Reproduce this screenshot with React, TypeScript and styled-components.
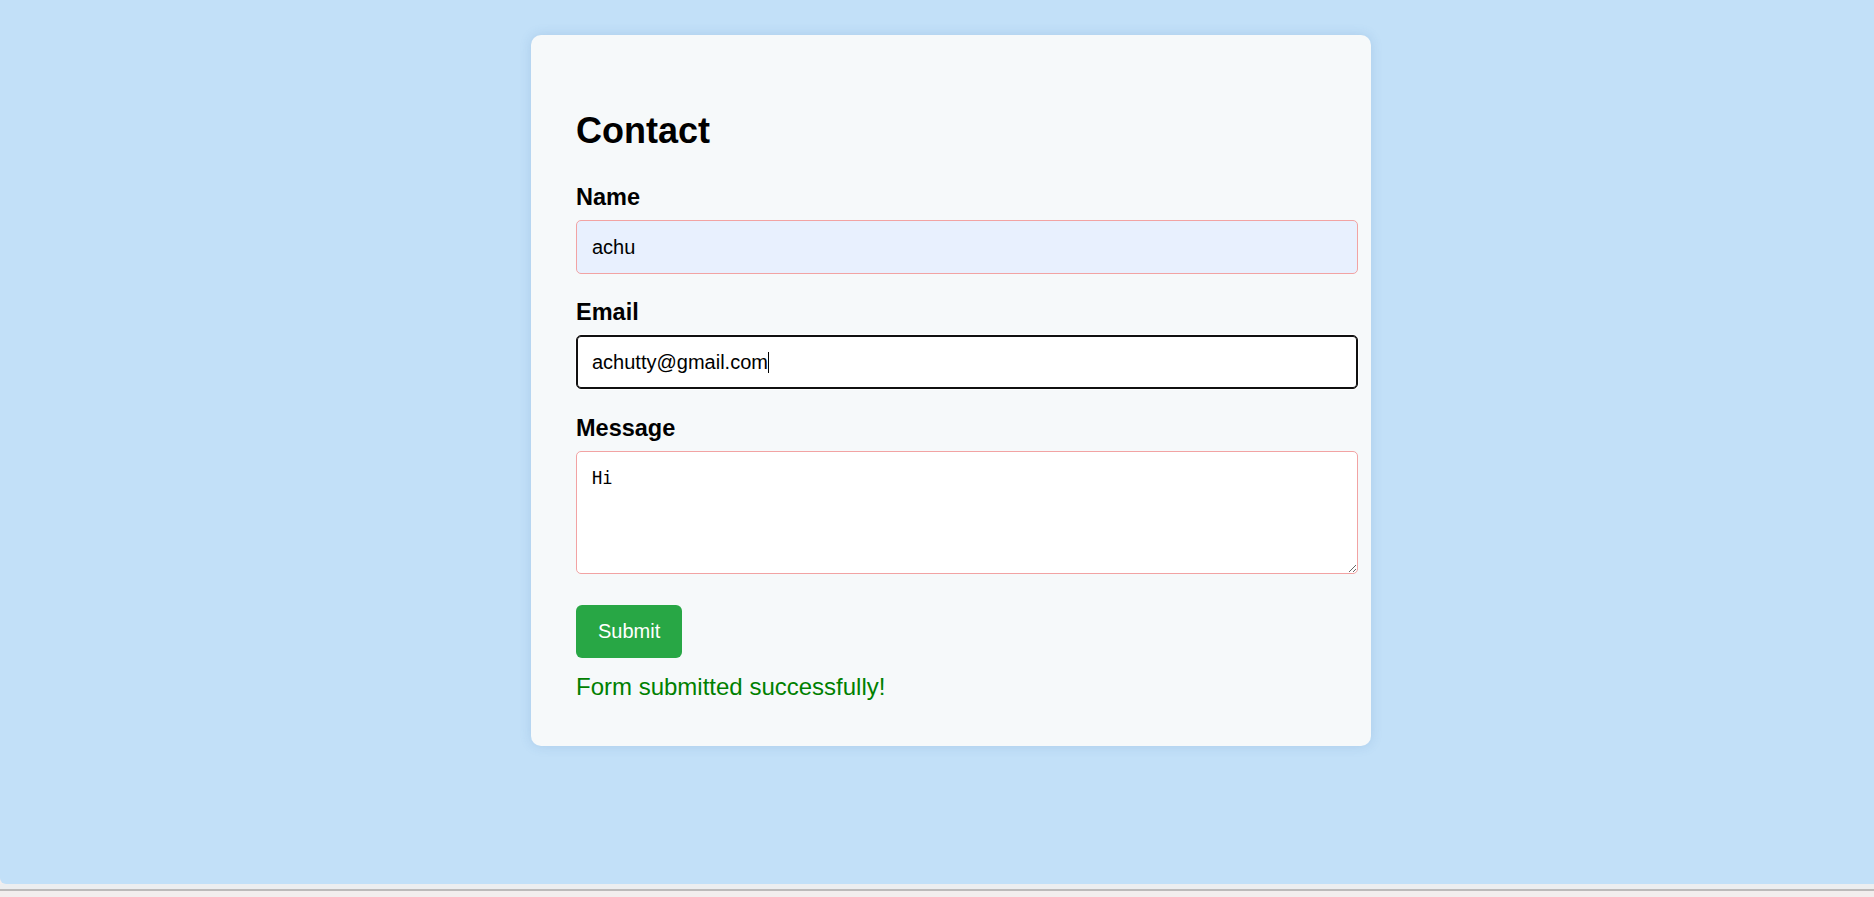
import React from "react";
import styled, { createGlobalStyle } from "styled-components";

const Global = createGlobalStyle`
  html, body { margin: 0; padding: 0; }
  body { font-family: "Liberation Sans", Arial, sans-serif; background: #f2eeee; }
`;

const Screen = styled.div`
  display: flex;
  flex-direction: column;
  height: 897px;
`;

const Page = styled.main`
  height: 849px;
  padding: 35px 0 0 28px;
  background: #c2e0f8;
  border-bottom-left-radius: 6px;
  display: flex;
  justify-content: center;
  align-items: flex-start;
`;

const EdgeLight = styled.div`
  height: 5px;
  background: #eceef0;
`;

const EdgeLine = styled.div`
  height: 2px;
  background: #bcbaba;
`;

const EdgeBase = styled.div`
  flex: 1;
  background: #f2eeee;
`;

const Card = styled.section`
  box-sizing: content-box;
  width: 750px;
  padding: 45px;
  background: #f6f9fa;
  border-radius: 10px;
  box-shadow: 0 0 12px rgba(60, 110, 170, 0.18);
`;

const Title = styled.h2`
  margin: 30px 0 33px;
  font-size: 36px;
  font-weight: 700;
  line-height: 41px;
  color: #000;
`;

const Field = styled.div<{ $gap?: number }>`
  position: relative;
  margin-bottom: ${(p) => p.$gap ?? 25}px;
`;

const Label = styled.label`
  display: block;
  margin-bottom: 10px;
  font-size: 23.5px;
  font-weight: 700;
  line-height: 26px;
  color: #000;
`;

const TextInput = styled.input<{ $focused?: boolean; $filled?: boolean }>`
  display: block;
  box-sizing: content-box;
  width: 100%;
  height: 22px;
  padding: 15px;
  margin: 0;
  font-family: "Liberation Sans", Arial, sans-serif;
  font-size: 20px;
  line-height: 22px;
  color: #000;
  background: ${(p) => (p.$filled ? "#e8f0fe" : "#fff")};
  border: 1px solid ${(p) => (p.$focused ? "#101010" : "#f2a3a3")};
  border-radius: 5px;
  outline: none;
  box-shadow: ${(p) =>
    p.$focused ? "inset 0 0 0 1px #101010, 0 0 0 1px #ffffff" : "none"};
`;

const Caret = styled.span`
  position: absolute;
  left: 192px;
  bottom: 16px;
  width: 1.4px;
  height: 21px;
  background: #000;
`;

const TextArea = styled.textarea`
  display: block;
  box-sizing: content-box;
  width: 100%;
  height: 91px;
  padding: 15px;
  margin: 0;
  font-family: "DejaVu Sans Mono", monospace;
  font-size: 17px;
  line-height: 22px;
  color: #000;
  background: #fff;
  border: 1px solid #f2a3a3;
  border-radius: 5px;
  outline: none;
  resize: vertical;
`;

const SubmitButton = styled.button`
  display: block;
  height: 53px;
  padding: 0 22px;
  font-family: "Liberation Sans", Arial, sans-serif;
  font-size: 20px;
  color: #fff;
  background: #28a745;
  border: none;
  border-radius: 6px;
  cursor: pointer;
`;

const Success = styled.p`
  margin: 15px 0 0;
  font-size: 24px;
  line-height: 27.6px;
  color: #008000;
`;

export default function App() {
  return (
    <>
      <Global />
      <Screen>
        <Page>
          <Card>
            <Title>Contact</Title>
            <form onSubmit={(e) => e.preventDefault()}>
              <Field>
                <Label htmlFor="name">Name</Label>
                <TextInput id="name" type="text" defaultValue="achu" $filled />
              </Field>
              <Field $gap={26}>
                <Label htmlFor="email">Email</Label>
                <TextInput
                  id="email"
                  type="email"
                  defaultValue="achutty@gmail.com"
                  $focused
                />
                <Caret />
              </Field>
              <Field $gap={31}>
                <Label htmlFor="message">Message</Label>
                <TextArea id="message" defaultValue="Hi" />
              </Field>
              <SubmitButton type="submit">Submit</SubmitButton>
            </form>
            <Success>Form submitted successfully!</Success>
          </Card>
        </Page>
        <EdgeLight />
        <EdgeLine />
        <EdgeBase />
      </Screen>
    </>
  );
}
